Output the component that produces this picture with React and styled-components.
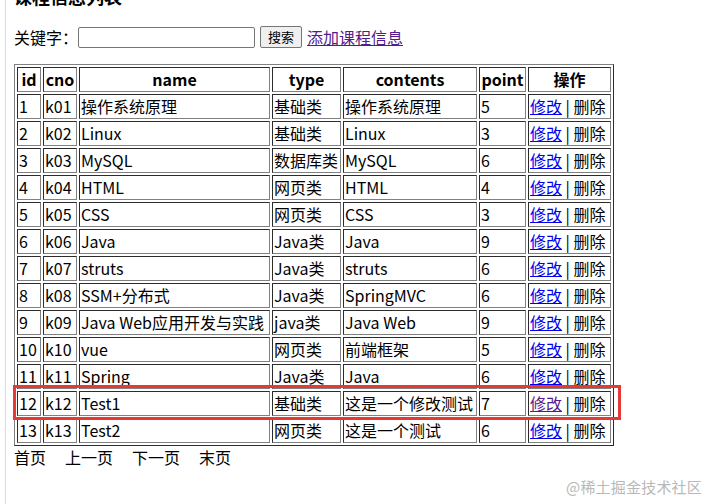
import React from 'react';
import styled, { createGlobalStyle } from 'styled-components';

const GlobalStyle = createGlobalStyle`
  html, body {
    margin: 0;
    padding: 0;
    background: #fff;
  }
  body {
    font-family: "Noto Sans CJK SC", "Noto Sans", sans-serif;
    font-size: 16px;
    color: #000;
  }
`;

const Page = styled.div`
  position: relative;
  height: 504px;
  margin-left: 5px;
  padding-left: 8px;
  border-left: 1px solid #dcdcdc;
  overflow: hidden;
  box-sizing: border-box;
`;

const Title = styled.h3`
  margin: -16px 0 0;
  font-size: 18px;
  line-height: 24px;
  font-weight: bold;
`;

const SearchRow = styled.form`
  display: flex;
  align-items: center;
  height: 24px;
  margin-top: 17px;
  line-height: 23px;
`;

const Label = styled.span`
  width: 64px;
`;

const KeyInput = styled.input`
  width: 177px;
  height: 21px;
  box-sizing: border-box;
  border: 1px solid #767676;
  border-radius: 2px;
  padding: 1px 2px;
  font-size: 13px;
`;

const SearchButton = styled.button`
  width: 42px;
  height: 22px;
  margin-left: 5px;
  box-sizing: border-box;
  border: 1px solid #767676;
  border-radius: 2px;
  background: #efefef;
  font-family: inherit;
  font-size: 13px;
  line-height: 18px;
  padding: 0;
  color: #000;
`;

const AddLink = styled.a`
  margin-left: 5px;
  color: #551a8b;
  text-decoration: underline;
`;

const Table = styled.table`
  margin-top: 15px;
  border: 1px outset gray;
  border-spacing: 2px;
  border-collapse: separate;
`;

const Cell = styled.td`
  box-sizing: border-box;
  height: 25px;
  padding: 0 1px;
  border: 1px inset gray;
  line-height: 23px;
  white-space: nowrap;
  text-align: ${p => (p.$center ? 'center' : 'left')};
  font-weight: ${p => (p.$head ? 'bold' : 'normal')};
`;

const EditLink = styled.a`
  color: ${p => (p.$visited ? '#551a8b' : '#0000ee')};
  text-decoration: underline;
`;

const Pager = styled.div`
  display: flex;
  gap: 19px;
  line-height: 23px;
`;

const Highlight = styled.div`
  position: absolute;
  left: 7px;
  top: 385px;
  width: 608px;
  height: 35px;
  box-sizing: border-box;
  border: 3px solid #e53935;
  pointer-events: none;
`;

const Watermark = styled.div`
  position: absolute;
  right: 16px;
  bottom: 7px;
  font-size: 15px;
  line-height: 20px;
  color: #b8b8b8;
  letter-spacing: 0.2px;
`;

const columns = [
  { key: 'id', label: 'id', width: 24 },
  { key: 'cno', label: 'cno', width: 34 },
  { key: 'name', label: 'name', width: 191 },
  { key: 'type', label: 'type', width: 69 },
  { key: 'contents', label: 'contents', width: 134 },
  { key: 'point', label: 'point', width: 47 },
  { key: 'op', label: '操作', width: 83 }
];

const rows = [
  [1, 'k01', '操作系统原理', '基础类', '操作系统原理', 5],
  [2, 'k02', 'Linux', '基础类', 'Linux', 3],
  [3, 'k03', 'MySQL', '数据库类', 'MySQL', 6],
  [4, 'k04', 'HTML', '网页类', 'HTML', 4],
  [5, 'k05', 'CSS', '网页类', 'CSS', 3],
  [6, 'k06', 'Java', 'Java类', 'Java', 9],
  [7, 'k07', 'struts', 'Java类', 'struts', 6],
  [8, 'k08', 'SSM+分布式', 'Java类', 'SpringMVC', 6],
  [9, 'k09', 'Java Web应用开发与实践', 'java类', 'Java Web', 9],
  [10, 'k10', 'vue', '网页类', '前端框架', 5],
  [11, 'k11', 'Spring', 'Java类', 'Java', 6],
  [12, 'k12', 'Test1', '基础类', '这是一个修改测试', 7],
  [13, 'k13', 'Test2', '网页类', '这是一个测试', 6]
];

export default function App() {
  return (
    <>
      <GlobalStyle />
      <Page>
        <Title>课程信息列表</Title>
        <SearchRow onSubmit={e => e.preventDefault()}>
          <Label>关键字：</Label>
          <KeyInput type="text" />
          <SearchButton type="submit">搜索</SearchButton>
          <AddLink href="#add">添加课程信息</AddLink>
        </SearchRow>
        <Table>
          <thead>
            <tr>
              {columns.map(c => (
                <Cell as="th" key={c.key} $head $center style={{ width: c.width }}>
                  {c.label}
                </Cell>
              ))}
            </tr>
          </thead>
          <tbody>
            {rows.map(r => (
              <tr key={r[0]}>
                {r.map((v, i) => (
                  <Cell key={i}>{v}</Cell>
                ))}
                <Cell>
                  <EditLink href="#edit" $visited={r[0] === 12}>
                    修改
                  </EditLink>{' '}
                  | 删除
                </Cell>
              </tr>
            ))}
          </tbody>
        </Table>
        <Pager>
          <span>首页</span>
          <span>上一页</span>
          <span>下一页</span>
          <span>末页</span>
        </Pager>
        <Highlight />
        <Watermark>@稀土掘金技术社区</Watermark>
      </Page>
    </>
  );
}
